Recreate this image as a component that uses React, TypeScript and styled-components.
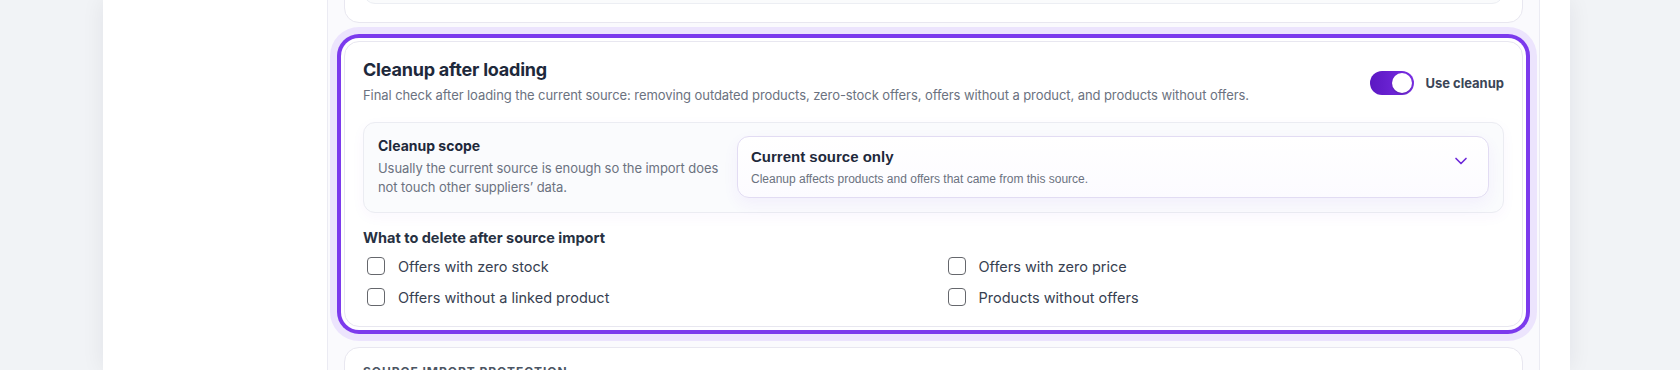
import React from "react";
import styled, { createGlobalStyle } from "styled-components";
import { ChevronDown } from "lucide-react";

const GlobalStyle = createGlobalStyle`
  html, body {
    margin: 0;
    padding: 0;
    background: #f1f3f6;
    font-family: Inter, "Noto Sans", "Liberation Sans", sans-serif;
    -webkit-font-smoothing: antialiased;
  }
  * {
    box-sizing: border-box;
  }
`;

const Page = styled.div`
  height: 370px;
  overflow: hidden;
  display: flex;
  padding: 0 110px 0 103px;
`;

const Panel = styled.div`
  flex: 1;
  display: flex;
  background: #ffffff;
  padding: 0 30px 0 224px;
  box-shadow: 0 0 22px rgba(15, 23, 42, 0.07);
`;

const SectionList = styled.div`
  flex: 1;
  display: flex;
  flex-direction: column;
  gap: 18px;
  margin-top: -97px;
  padding: 0 16px;
  background: #fafafd;
  border-left: 1px solid #ebebf3;
  border-right: 1px solid #ebebf3;
`;

const Card = styled.section<{ active?: boolean }>`
  background: #ffffff;
  border: 1px solid #e8e7f0;
  border-radius: 15px;
  padding: 16px 18px 18px;
  ${({ active }) =>
    active &&
    `
    box-shadow: 0 0 0 3px #ffffff, 0 0 0 7px #7c3aed, 0 0 0 14px #ece4fd;
    margin-bottom: 2px;
  `}
`;

const PrevInner = styled.div`
  height: 80px;
  margin-top: 4px;
  border: 1px solid #eceef3;
  border-radius: 12px;
  background: #fafbfc;
`;

const Header = styled.div`
  display: flex;
  align-items: center;
  justify-content: space-between;
  gap: 24px;
  margin-bottom: 18px;
`;

const Title = styled.h2`
  margin: 0;
  font-size: 18px;
  line-height: 24px;
  font-weight: 700;
  color: #1e293b;
  letter-spacing: -0.012em;
`;

const Description = styled.p`
  margin: 4px 0 0;
  font-size: 13px;
  line-height: 18px;
  letter-spacing: -0.006em;
  color: #6b7280;
`;

const ToggleLabel = styled.label`
  display: flex;
  align-items: center;
  gap: 11px;
  margin-top: 4px;
  font-size: 13px;
  font-weight: 700;
  color: #3b4557;
  white-space: nowrap;
  cursor: pointer;
`;

const Switch = styled.span<{ on: boolean }>`
  position: relative;
  width: 44px;
  height: 24px;
  border-radius: 12px;
  background: ${({ on }) =>
    on ? "linear-gradient(90deg, #5b17c2, #7a2fe4)" : "#d1d5db"};

  &::after {
    content: "";
    position: absolute;
    top: 2px;
    left: ${({ on }) => (on ? "22px" : "2px")};
    width: 20px;
    height: 20px;
    border-radius: 50%;
    background: #ffffff;
    box-shadow: 0 1px 2px rgba(0, 0, 0, 0.2);
  }
`;

const ScopeBox = styled.div`
  display: grid;
  grid-template-columns: 343px 1fr;
  align-items: center;
  gap: 16px;
  padding: 13px 14px 14px 14px;
  border: 1px solid #ebecf2;
  border-radius: 12px;
  background: #fafbfd;
  box-shadow: 0 4px 14px rgba(124, 58, 237, 0.04);
`;

const FieldTitle = styled.div`
  font-size: 14px;
  line-height: 18px;
  font-weight: 700;
  color: #1e293b;
`;

const FieldHint = styled.div`
  margin-top: 4px;
  font-size: 13px;
  line-height: 19px;
  letter-spacing: -0.006em;
  color: #6b7280;
`;

const Select = styled.button`
  display: flex;
  align-items: flex-start;
  justify-content: space-between;
  width: 100%;
  padding: 10px 17px 10px 13px;
  border: 1px solid #e2dcf3;
  border-radius: 12px;
  background: linear-gradient(180deg, #ffffff, #fcfbff);
  box-shadow: 0 6px 16px rgba(124, 58, 237, 0.06);
  text-align: left;
  font-family: "Liberation Sans", Arial, sans-serif;
  cursor: pointer;

  svg {
    margin-top: 4px;
    flex-shrink: 0;
    color: #6d28d9;
  }
`;

const SelectValue = styled.div`
  font-size: 15px;
  line-height: 20px;
  font-weight: 700;
  color: #1e293b;
`;

const SelectHint = styled.div`
  margin-top: 4px;
  font-size: 12px;
  line-height: 16px;
  color: #6b7280;
`;

const GroupTitle = styled.div`
  margin-top: 16px;
  font-size: 14.5px;
  line-height: 18px;
  font-weight: 700;
  color: #273142;
`;

const OptionGrid = styled.div`
  display: grid;
  grid-template-columns: 1fr 1fr;
  column-gap: 20px;
  row-gap: 9px;
  margin-top: 8px;
`;

const Option = styled.label`
  display: flex;
  align-items: center;
  gap: 13px;
  height: 22px;
  font-size: 14.5px;
  color: #374151;
  cursor: pointer;
`;

const Box = styled.span<{ checked: boolean }>`
  width: 18px;
  height: 18px;
  margin-left: 4px;
  border: 1px solid #65676c;
  border-radius: 4px;
  background: ${({ checked }) => (checked ? "#7c3aed" : "#ffffff")};
`;

const Eyebrow = styled.div`
  font-size: 12px;
  line-height: 16px;
  font-weight: 700;
  letter-spacing: 0.08em;
  text-transform: uppercase;
  color: #4b5563;
`;

const options = [
  "Offers with zero stock",
  "Offers with zero price",
  "Offers without a linked product",
  "Products without offers",
];

export default function App() {
  const [enabled, setEnabled] = React.useState(true);
  const [checked, setChecked] = React.useState<Record<string, boolean>>({});

  return (
    <>
      <GlobalStyle />
      <Page>
        <Panel>
          <SectionList>
            <Card>
              <PrevInner />
            </Card>

            <Card active>
              <Header>
                <div>
                  <Title>Cleanup after loading</Title>
                  <Description>
                    Final check after loading the current source: removing
                    outdated products, zero-stock offers, offers without a
                    product, and products without offers.
                  </Description>
                </div>
                <ToggleLabel onClick={() => setEnabled(!enabled)}>
                  <Switch on={enabled} />
                  Use cleanup
                </ToggleLabel>
              </Header>

              <ScopeBox>
                <div>
                  <FieldTitle>Cleanup scope</FieldTitle>
                  <FieldHint>
                    Usually the current source is enough so the import does
                    not touch other suppliers’ data.
                  </FieldHint>
                </div>
                <Select type="button">
                  <div>
                    <SelectValue>Current source only</SelectValue>
                    <SelectHint>
                      Cleanup affects products and offers that came from this
                      source.
                    </SelectHint>
                  </div>
                  <ChevronDown size={20} strokeWidth={2} />
                </Select>
              </ScopeBox>

              <GroupTitle>What to delete after source import</GroupTitle>
              <OptionGrid>
                {options.map((o) => (
                  <Option
                    key={o}
                    onClick={() => setChecked({ ...checked, [o]: !checked[o] })}
                  >
                    <Box checked={!!checked[o]} />
                    {o}
                  </Option>
                ))}
              </OptionGrid>
            </Card>

            <Card>
              <Eyebrow>Source import protection</Eyebrow>
            </Card>
          </SectionList>
        </Panel>
      </Page>
    </>
  );
}
